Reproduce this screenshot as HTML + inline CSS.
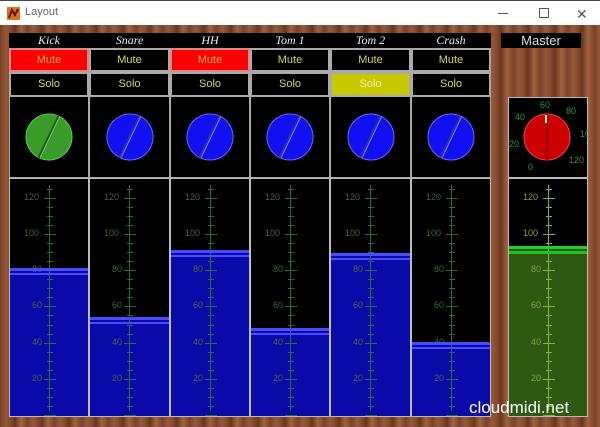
<!DOCTYPE html>
<html style="overflow:hidden"><head><style>
*{margin:0;padding:0;box-sizing:border-box}
html,body{width:600px;height:427px;overflow:hidden}
body{position:relative;font-family:"Liberation Sans",sans-serif;
background:repeating-linear-gradient(90deg,#7a4128 0px,#96583a 6px,#84492c 11px,#6a3520 15px,#a0623f 21px,#7e452a 27px);}
#tb{position:absolute;left:0;top:0;width:600px;height:25px;background:#fff;border-top:1px solid #444}
#tb .t{position:absolute;left:25px;top:5px;font-size:11px;color:#666}
.ab{position:absolute;background:#000}
.nm{position:absolute;height:15px;top:33px;background:#000;color:#eee;font:italic 12px "Liberation Serif",serif;text-align:center;line-height:14px}
.btn{position:absolute;font-size:11px;text-align:center;border:2px solid #aaa;color:#d8d84a}
.fd{position:absolute;background:#000;border:1px solid #bbb;overflow:hidden}
.lab{position:absolute;font-size:9px;color:#3a7a30;width:20px;text-align:right}
</style></head><body>
<div id="tb"><svg style="position:absolute;left:7px;top:6px" width="13" height="13"><rect width="13" height="13" fill="#e07020"/><path d="M2 11 L5 3 L8 8 L11 2" stroke="#5a1a00" stroke-width="2" fill="none"/></svg><div class="t">Layout</div>
<div style="position:absolute;left:498px;top:12px;width:10px;height:1px;background:#555"></div>
<div style="position:absolute;left:539px;top:7px;width:10px;height:10px;border:1px solid #555"></div>
<div style="position:absolute;left:576px;top:5px;font-size:14px;color:#555">✕</div></div>
<div id="app"></div>
<div style="position:absolute;left:469px;top:398px;font-size:17px;color:#fff;line-height:20px">cloudmidi.net</div>
<script>
var names=["Kick","Snare","HH","Tom 1","Tom 2","Crash"];
var xs=[9,89,170,250,330,411,491];
var lv=[267,316,249,327,252,341];
var h="";
function ticks(c1,c2){var s="";for(var v=0;v<=125;v+=5){var y=414-v*1.81-178;var w=v%20==0?12:6;
s+='<div style="position:absolute;left:'+(40-w/2)+'px;top:'+y+'px;width:'+w+'px;height:1px;background:'+c1+'"></div>';}
s+='<div style="position:absolute;left:39px;top:'+(414-127*1.81-178)+'px;width:1px;height:'+(125*1.81)+'px;background:'+c1+'"></div>';
for(var v=20;v<=120;v+=20){var y=414-v*1.81-178-6;s+='<div class="lab" style="left:'+(v>=100?9:12)+'px;top:'+y+'px;color:'+c2+'">'+v+'</div>';}return s;}
for(var i=0;i<6;i++){var x=xs[i],w=xs[i+1]-x;
h+='<div class="nm" style="left:'+x+'px;width:'+w+'px">'+names[i]+'</div>';
var mr=(i==0||i==2);h+='<div class="btn" style="left:'+x+'px;top:48px;width:'+w+'px;height:24px;line-height:20px;'+(mr?'background:#f00;color:#ffb040;border-color:#d88':'background:#000')+'">Mute</div>';
var sy=(i==4);h+='<div class="btn" style="left:'+x+'px;top:72px;width:'+w+'px;height:25px;line-height:21px;'+(sy?'background:#c8c800;color:#f0f0a0':'background:#000')+'">Solo</div>';
var cx=x+w/2;var col=i==0?'#3a9a2a':'#1010f0';
h+='<div class="ab" style="left:'+x+'px;top:97px;width:'+w+'px;height:81px;border:1px solid #aaa;border-top:none"></div>';
h+='<svg style="position:absolute;left:'+(cx-30)+'px;top:107px" width="60" height="60"><circle cx="30" cy="30" r="23" fill="'+col+'" stroke="'+(i==0?'#5c5':'#66f')+'" stroke-width="1"/><line x1="20" y1="51" x2="40" y2="9" stroke="'+(i==0?'#1a5a10':'#3030a0')+'" stroke-width="3"/><line x1="21" y1="51" x2="41" y2="9" stroke="'+(i==0?'#8c8':'#77f')+'" stroke-width="1"/></svg>';
h+='<div class="fd" style="left:'+x+'px;top:178px;width:'+w+'px;height:239px">'+
'<div style="position:absolute;left:0;top:'+(lv[i]-178)+'px;width:100%;height:'+(418-lv[i])+'px;background:#0a0aa8"></div>'+ticks('#2e6a3a','#3a6a3a')+
'<div style="position:absolute;left:0;top:'+(lv[i]-178)+'px;width:100%;height:3px;background:#4a4aff"></div>'+
'<div style="position:absolute;left:0;top:'+(lv[i]-178+5)+'px;width:100%;height:2px;background:#4a4aff"></div></div>';}
h+='<div class="ab" style="left:501px;top:33px;width:80px;height:15px;color:#ddd;font-size:13px;text-align:center;line-height:15px">Master</div>';
h+='<div class="ab" style="left:508px;top:97px;width:80px;height:81px;border:1px solid #bbb"></div>';
h+='<svg style="position:absolute;left:508px;top:97px" width="80" height="81"><circle cx="39" cy="40" r="23" fill="#c00" stroke="#e44"/><line x1="39" y1="17" x2="39" y2="63" stroke="#900" stroke-width="2"/><line x1="38" y1="18" x2="38" y2="26" stroke="#ff8" stroke-width="2"/>'+
'<g font-family="Liberation Sans" font-size="9" fill="#2a9a2a"><text x="32" y="11">60</text><text x="58" y="17">80</text><text x="72" y="40">100</text><text x="61" y="66">120</text><text x="20" y="73">0</text><text x="1" y="50">20</text><text x="7" y="23">40</text></g></svg>';
h+='<div class="fd" style="left:508px;top:178px;width:80px;height:239px"><div style="position:absolute;left:0;top:'+(247-178)+'px;width:100%;height:171px;background:#2d5a10"></div>'+ticks('#8ab040','#8aa040')+
'<div style="position:absolute;left:0;top:'+(245-178)+'px;width:100%;height:3px;background:#20d020"></div><div style="position:absolute;left:0;top:'+(250-178)+'px;width:100%;height:3px;background:#20c020"></div></div>';
document.getElementById('app').innerHTML=h;
</script>
</body></html>
